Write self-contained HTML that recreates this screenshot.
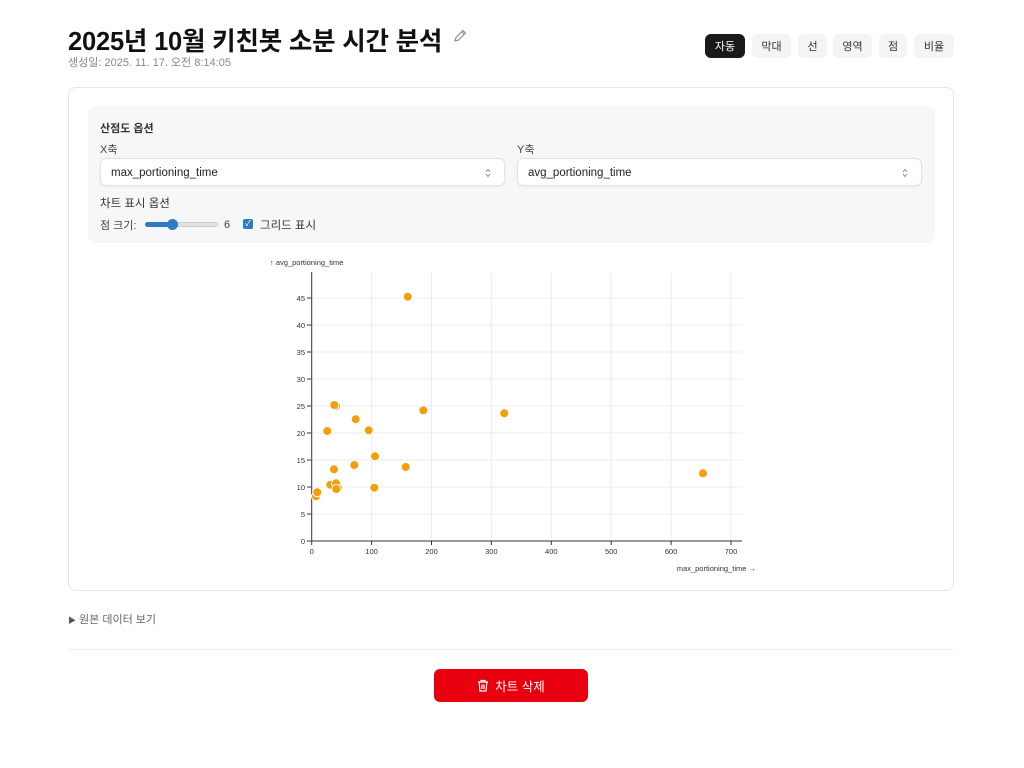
<!DOCTYPE html>
<html><head><meta charset="utf-8"><style>
*{box-sizing:border-box;margin:0;padding:0}
body{width:1024px;height:768px;background:#fff;font-family:"Liberation Sans","Noto Sans CJK KR",sans-serif;position:relative;overflow:hidden;color:#111}
.a{position:absolute}
h1{position:absolute;left:68px;top:21px;font-size:25.5px;font-weight:700;color:#111;letter-spacing:-0.2px;white-space:nowrap}
.sub{left:68px;top:54px;font-size:11px;color:#888}
.btn{position:absolute;top:34px;height:24px;border-radius:6px;background:#f3f4f6;color:#333;font-size:11px;display:flex;align-items:center;justify-content:center}
.card{left:68px;top:87px;width:886px;height:504px;border:1px solid #e3e5e8;border-radius:8px}
.panel{left:88px;top:106px;width:847px;height:137px;background:#f6f7f9;border-radius:8px}
.sel{position:absolute;top:158px;height:28px;background:#fff;border:1px solid #e1e3e6;border-radius:6px;font-size:11.5px;color:#222;padding-left:10px;line-height:28px;box-shadow:0 1px 2px rgba(0,0,0,.05)}
.sel svg{position:absolute;right:13px;top:9px}
.lbl{font-size:11px;color:#444}
</style></head><body>
<h1>2025년 10월 키친봇 소분 시간 분석</h1>
<svg class="a" style="left:452px;top:28px" width="16" height="16" viewBox="0 0 16 16"><path d="M3 13l1-3.5L11 2.5l2.5 2.5L6.5 12z M10 4l2 2" fill="none" stroke="#888" stroke-width="1.1"/></svg>
<div class="a sub">생성일: 2025. 11. 17. 오전 8:14:05</div>
<div class="btn" style="left:705px;width:40px;background:#1a1a1a;color:#fff">자동</div>
<div class="btn" style="left:752px;width:39px">막대</div>
<div class="btn" style="left:798px;width:29px">선</div>
<div class="btn" style="left:833px;width:39px">영역</div>
<div class="btn" style="left:879px;width:28px">점</div>
<div class="btn" style="left:914px;width:40px">비율</div>
<div class="a card"></div>
<div class="a panel"></div>
<div class="a" style="left:100px;top:120px;font-size:11px;font-weight:700;color:#333">산점도 옵션</div>
<div class="a lbl" style="left:100px;top:141px">X축</div>
<div class="a lbl" style="left:517px;top:141px">Y축</div>
<div class="sel" style="left:100px;width:405px">max_portioning_time<svg width="6" height="10" viewBox="0 0 6 10"><path d="M1 4l2-2.5L5 4M1 6l2 2.5L5 6" fill="none" stroke="#888" stroke-width="0.9"/></svg></div>
<div class="sel" style="left:517px;width:405px">avg_portioning_time<svg width="6" height="10" viewBox="0 0 6 10"><path d="M1 4l2-2.5L5 4M1 6l2 2.5L5 6" fill="none" stroke="#888" stroke-width="0.9"/></svg></div>
<div class="a" style="left:100px;top:195px;font-size:11.5px;color:#333">차트 표시 옵션</div>
<div class="a lbl" style="left:100px;top:217px">점 크기:</div>
<div class="a" style="left:145px;top:222px;width:73px;height:5px;border-radius:3px;background:#e3e3e3;border:1px solid #ccc"></div>
<div class="a" style="left:145px;top:222px;width:28px;height:5px;border-radius:3px;background:#2f7bc0"></div>
<div class="a" style="left:167px;top:219px;width:11px;height:11px;border-radius:50%;background:#2f7bc0"></div>
<div class="a lbl" style="left:224px;top:219px">6</div>
<div class="a" style="left:243px;top:219px;width:10px;height:10px;border-radius:2px;background:#2f7bc0;color:#fff;font-size:8px;line-height:10px;text-align:center">✓</div>
<div class="a" style="left:260px;top:217px;font-size:11.5px;color:#333">그리드 표시</div>
<svg class="a" style="left:0;top:0" width="1024" height="600">
<g stroke="#ececec" stroke-width="1">
<line x1="371.6" y1="273" x2="371.6" y2="541"/><line x1="431.5" y1="273" x2="431.5" y2="541"/><line x1="491.4" y1="273" x2="491.4" y2="541"/><line x1="551.3" y1="273" x2="551.3" y2="541"/><line x1="611.2" y1="273" x2="611.2" y2="541"/><line x1="671.1" y1="273" x2="671.1" y2="541"/><line x1="731" y1="273" x2="731" y2="541"/>
<line x1="312" y1="514" x2="742" y2="514"/><line x1="312" y1="487" x2="742" y2="487"/><line x1="312" y1="460" x2="742" y2="460"/><line x1="312" y1="433" x2="742" y2="433"/><line x1="312" y1="406" x2="742" y2="406"/><line x1="312" y1="379" x2="742" y2="379"/><line x1="312" y1="352" x2="742" y2="352"/><line x1="312" y1="325" x2="742" y2="325"/><line x1="312" y1="298" x2="742" y2="298"/>
</g>
<g stroke="#333" stroke-width="1"><line x1="311.7" y1="272" x2="311.7" y2="541"/><line x1="311.7" y1="541" x2="742" y2="541"/>
<path d="M307 541h4M307 514h4M307 487h4M307 460h4M307 433h4M307 406h4M307 379h4M307 352h4M307 325h4M307 298h4M311.7 541v4M371.6 541v4M431.5 541v4M491.4 541v4M551.3 541v4M611.2 541v4M671.1 541v4M731 541v4"/></g>
<g font-size="7.5" fill="#333" font-family="Liberation Sans,sans-serif" text-anchor="end">
<text x="305" y="544">0</text><text x="305" y="517">5</text><text x="305" y="490">10</text><text x="305" y="463">15</text><text x="305" y="436">20</text><text x="305" y="409">25</text><text x="305" y="382">30</text><text x="305" y="355">35</text><text x="305" y="328">40</text><text x="305" y="301">45</text>
</g>
<g font-size="7.5" fill="#333" font-family="Liberation Sans,sans-serif" text-anchor="middle">
<text x="311.7" y="554">0</text><text x="371.6" y="554">100</text><text x="431.5" y="554">200</text><text x="491.4" y="554">300</text><text x="551.3" y="554">400</text><text x="611.2" y="554">500</text><text x="671.1" y="554">600</text><text x="731" y="554">700</text>
</g>
<text x="270" y="265" font-size="7.5" fill="#333" font-family="Liberation Sans,sans-serif">↑  avg_portioning_time</text>
<text x="756" y="571" font-size="7.5" fill="#333" font-family="Liberation Sans,sans-serif" text-anchor="end">max_portioning_time →</text>
<g fill="#f59e0b" stroke="#fff" stroke-width="1">
<circle cx="336" cy="406" r="4.5"/><circle cx="338" cy="488" r="4.5"/><circle cx="316" cy="496.3" r="4.5"/>
<circle cx="407.7" cy="296.7" r="4.5"/><circle cx="334.3" cy="405" r="4.5"/><circle cx="423.3" cy="410.3" r="4.5"/><circle cx="504.3" cy="413.3" r="4.5"/><circle cx="355.7" cy="419.3" r="4.5"/><circle cx="327.3" cy="431" r="4.5"/><circle cx="368.7" cy="430.3" r="4.5"/><circle cx="375" cy="456.3" r="4.5"/><circle cx="354.3" cy="465" r="4.5"/><circle cx="405.7" cy="467" r="4.5"/><circle cx="334" cy="469.3" r="4.5"/><circle cx="703" cy="473.3" r="4.5"/><circle cx="330.3" cy="484.7" r="4.5"/><circle cx="336" cy="483.3" r="4.5"/><circle cx="336.3" cy="489" r="4.5"/><circle cx="374.3" cy="487.7" r="4.5"/><circle cx="317.3" cy="492.3" r="4.5"/>
</g>
</svg>
<div class="a" style="left:68px;top:611px;font-size:11px;color:#666"><span style="font-size:8px;color:#555">▶</span> 원본 데이터 보기</div>
<div class="a" style="left:68px;top:649px;width:886px;height:1px;background:#eee"></div>
<div class="a" style="left:434px;top:669px;width:154px;height:33px;background:#e8000f;border-radius:6px;color:#fff;font-size:12.5px;display:flex;align-items:center;justify-content:center;gap:6px">
<svg width="12" height="13" viewBox="0 0 12 13"><path d="M1 3h10M4 3V1.5h4V3M2.2 3l.7 9h6.2l.7-9M5 5.5v4.5M7 5.5v4.5" fill="none" stroke="#fff" stroke-width="1.2"/></svg>차트 삭제</div>
</body></html>
